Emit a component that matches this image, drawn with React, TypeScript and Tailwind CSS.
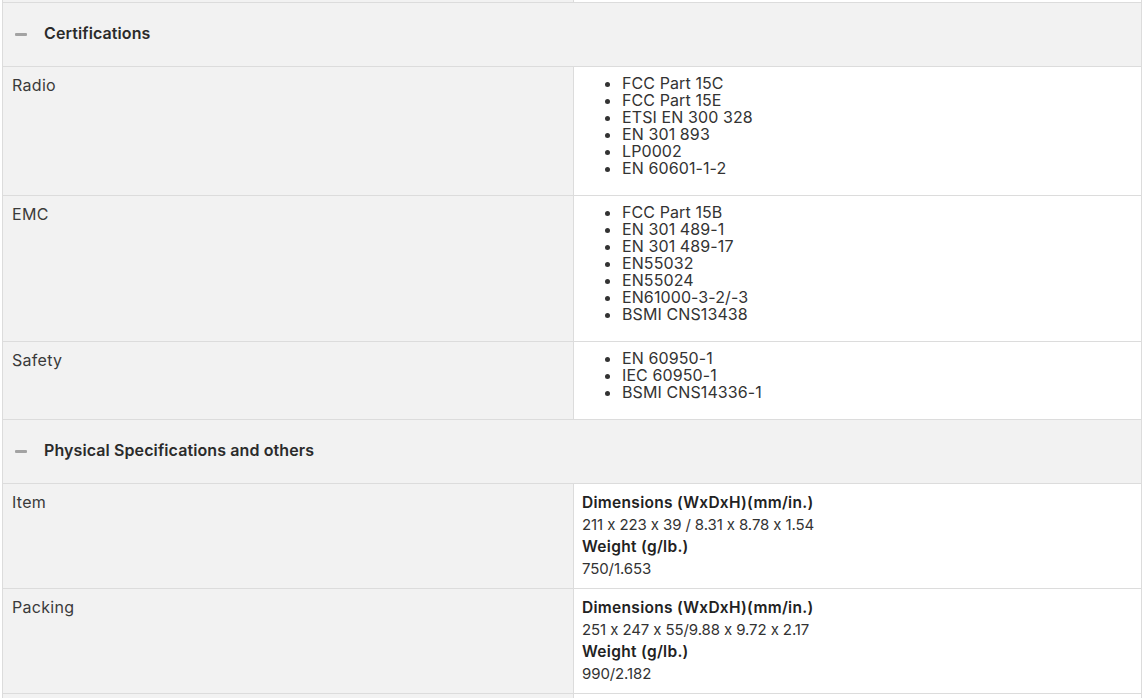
import React from "react";

function Minus() {
  return <span className="block w-[12px] h-[3px] bg-[#a3a3a3] rounded-[1px]" />;
}

function Header({ title }: { title: string }) {
  return (
    <div className="col-span-2 flex items-center h-[64px] bg-[#f2f2f2] border-b border-[#dcdcdc] pl-[12px]">
      <Minus />
      <span className="ml-[17px] mb-[3px] text-[16px] leading-[20px] font-semibold text-[#2b2b2b] tracking-[0.1px]">{title}</span>
    </div>
  );
}

function Label({ text }: { text: string }) {
  return (
    <div className="bg-[#f2f2f2] border-b border-r border-[#dcdcdc] pl-[9px] pt-[8px] text-[16px] leading-[20px] tracking-[0.3px] text-[#3a3a3a]">
      {text}
    </div>
  );
}

function ListRow({ label, items }: { label: string; items: string[] }) {
  return (
    <>
      <Label text={label} />
      <div className="bg-white border-b border-[#dcdcdc] pl-[8px] pt-[8px] pb-[18px]">
        <ul className="list-disc pl-[40px] text-[16px] leading-[17px] tracking-[0.1px] text-[#333]">
          {items.map((i) => (
            <li key={i}>{i}</li>
          ))}
        </ul>
      </div>
    </>
  );
}

function SpecRow({ label, dim, weight }: { label: string; dim: string; weight: string }) {
  return (
    <>
      <Label text={label} />
      <div className="bg-white border-b border-[#dcdcdc] pl-[8px] pt-[8px] pb-[8px] text-[15px] leading-[22px] tracking-[-0.1px] text-[#333]">
        <div className="font-semibold text-[15.5px] tracking-[0.3px] text-[#222]">Dimensions (WxDxH)(mm/in.)</div>
        <div>{dim}</div>
        <div className="font-semibold text-[15.5px] tracking-[0.3px] text-[#222]">Weight (g/lb.)</div>
        <div>{weight}</div>
      </div>
    </>
  );
}

export default function App() {
  return (
    <div className="w-[1146px] h-[698px] overflow-hidden bg-white font-['Inter','Noto_Sans',sans-serif] [font-feature-settings:'calt'_0]">
      <div className="ml-[2px] w-[1140px] border-l border-r border-[#dcdcdc] grid grid-cols-[571px_1fr]">
        <div className="h-[3px] bg-[#f2f2f2] border-r border-b border-[#dcdcdc]" />
        <div className="h-[3px] bg-white border-b border-[#dcdcdc]" />
        <Header title="Certifications" />
        <ListRow
          label="Radio"
          items={["FCC Part 15C", "FCC Part 15E", "ETSI EN 300 328", "EN 301 893", "LP0002", "EN 60601-1-2"]}
        />
        <ListRow
          label="EMC"
          items={[
            "FCC Part 15B",
            "EN 301 489-1",
            "EN 301 489-17",
            "EN55032",
            "EN55024",
            "EN61000-3-2/-3",
            "BSMI CNS13438",
          ]}
        />
        <ListRow label="Safety" items={["EN 60950-1", "IEC 60950-1", "BSMI CNS14336-1"]} />
        <Header title="Physical Specifications and others" />
        <SpecRow label="Item" dim="211 x 223 x 39 / 8.31 x 8.78 x 1.54" weight="750/1.653" />
        <SpecRow label="Packing" dim="251 x 247 x 55/9.88 x 9.72 x 2.17" weight="990/2.182" />
        <div className="h-[20px] bg-[#f2f2f2] border-r border-[#dcdcdc]" />
        <div className="h-[20px] bg-white" />
      </div>
    </div>
  );
}
